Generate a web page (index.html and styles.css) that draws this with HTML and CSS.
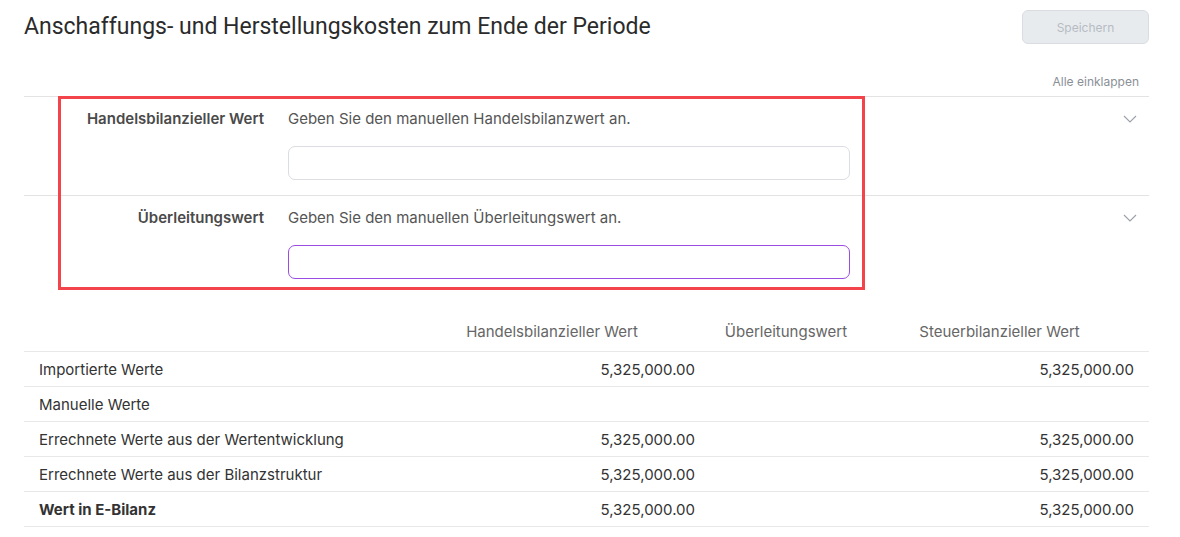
FILE: index.html
```html
<!DOCTYPE html>
<html>
<head>
    <title>Anschaffungs- und Herstellungskosten</title>
    <link rel="stylesheet" href="styles.css">
</head>
<body>
    <div class="page">
        <div class="header">
            <h1 class="title">Anschaffungs- und Herstellungskosten zum Ende der Periode</h1>
            <button class="save-button" disabled>Speichern</button>
        </div>

        <div class="toolbar">
            <span class="collapse-all">Alle einklappen</span>
        </div>

        <div class="sections">
            <div class="section">
                <div class="section-label">Handelsbilanzieller Wert</div>
                <div class="section-body">
                    <div class="section-hint">Geben Sie den manuellen Handelsbilanzwert an.</div>
                    <input class="value-input" type="text">
                </div>
                <div class="section-toggle">
                    <svg width="14" height="8" viewBox="0 0 14 8"><path d="M1 1l6 6 6-6" fill="none" stroke="#9aa0a8" stroke-width="1.1"/></svg>
                </div>
            </div>
            <div class="section">
                <div class="section-label">Überleitungswert</div>
                <div class="section-body">
                    <div class="section-hint">Geben Sie den manuellen Überleitungswert an.</div>
                    <input class="value-input active" type="text">
                </div>
                <div class="section-toggle">
                    <svg width="14" height="8" viewBox="0 0 14 8"><path d="M1 1l6 6 6-6" fill="none" stroke="#9aa0a8" stroke-width="1.1"/></svg>
                </div>
            </div>
            <div class="highlight"></div>
        </div>

        <table class="values">
            <colgroup>
                <col class="col-label">
                <col class="col-hb">
                <col class="col-ue">
                <col class="col-sb">
            </colgroup>
            <thead>
                <tr>
                    <th></th>
                    <th>Handelsbilanzieller Wert</th>
                    <th class="th-ue">Überleitungswert</th>
                    <th>Steuerbilanzieller Wert</th>
                </tr>
            </thead>
            <tbody>
                <tr>
                    <td>Importierte Werte</td>
                    <td class="num">5,325,000.00</td>
                    <td class="num"></td>
                    <td class="num">5,325,000.00</td>
                </tr>
                <tr>
                    <td>Manuelle Werte</td>
                    <td class="num"></td>
                    <td class="num"></td>
                    <td class="num"></td>
                </tr>
                <tr>
                    <td>Errechnete Werte aus der Wertentwicklung</td>
                    <td class="num">5,325,000.00</td>
                    <td class="num"></td>
                    <td class="num">5,325,000.00</td>
                </tr>
                <tr>
                    <td>Errechnete Werte aus der Bilanzstruktur</td>
                    <td class="num">5,325,000.00</td>
                    <td class="num"></td>
                    <td class="num">5,325,000.00</td>
                </tr>
                <tr class="total">
                    <td>Wert in E-Bilanz</td>
                    <td class="num">5,325,000.00</td>
                    <td class="num"></td>
                    <td class="num">5,325,000.00</td>
                </tr>
            </tbody>
        </table>
    </div>
</body>
</html>
```

FILE: styles.css
```css
body {
    margin: 0;
    font-family: Inter, "Noto Sans", sans-serif;
    font-size: 15px;
    color: #333;
    background-color: #fff;
}

.page {
    padding: 10px 31px 0 24px;
}

.header {
    display: flex;
    justify-content: space-between;
    align-items: flex-start;
    height: 50px;
}

.title {
    margin: 3px 0 0;
    font-family: Roboto, sans-serif;
    font-size: 23px;
    font-weight: 400;
    color: #2b2b2b;
}

.save-button {
    width: 127px;
    height: 34px;
    background-color: #e8ebee;
    border: 1px solid #d9dde2;
    border-radius: 6px;
    color: #b6bcc4;
    font-family: Inter, sans-serif;
    font-size: 12px;
}

.toolbar {
    display: flex;
    justify-content: flex-end;
    padding: 14px 10px 0 0;
    height: 22px;
}

.collapse-all {
    font-size: 12px;
    color: #8a8f96;
}

.sections {
    position: relative;
}

.section {
    display: flex;
    border-top: 1px solid #e3e3e3;
    height: 98px;
}

.section:last-of-type {
    border-bottom: 1px solid #e3e3e3;
}

.section-label {
    width: 240px;
    padding-top: 12px;
    text-align: right;
    font-weight: 600;
    color: #4a4a4a;
}

.section-body {
    width: 562px;
    margin-left: 24px;
    padding-top: 12px;
}

.section-hint {
    color: #555;
    height: 37px;
}

.value-input {
    display: block;
    box-sizing: border-box;
    width: 562px;
    height: 34px;
    border: 1px solid #dcdde2;
    border-radius: 7px;
    outline: none;
}

.value-input.active {
    border-color: #9a4de0;
}

.section-toggle {
    flex: 1;
    display: flex;
    justify-content: flex-end;
    padding: 18px 12px 0 0;
}

.highlight {
    position: absolute;
    left: 34px;
    top: 0;
    width: 801px;
    height: 188px;
    border: 3px solid #f2444a;
    pointer-events: none;
}

.values {
    width: 100%;
    margin-top: 18px;
    border-collapse: collapse;
    table-layout: fixed;
}

.col-label {
    width: 370px;
}

.col-hb {
    width: 316px;
}

.col-ue {
    width: 140px;
}

.col-sb {
    width: 299px;
}

.values th {
    height: 39px;
    padding: 0;
    font-weight: 400;
    color: #666;
    text-align: center;
    border-bottom: 1px solid #e8e8e8;
}

.values th.th-ue {
    padding-left: 12px;
}

.values td {
    height: 34px;
    padding: 0 15px;
    border-bottom: 1px solid #e8e8e8;
    color: #333;
}

.values td.num {
    text-align: right;
}

.total td:first-child {
    font-weight: 700;
}
```
